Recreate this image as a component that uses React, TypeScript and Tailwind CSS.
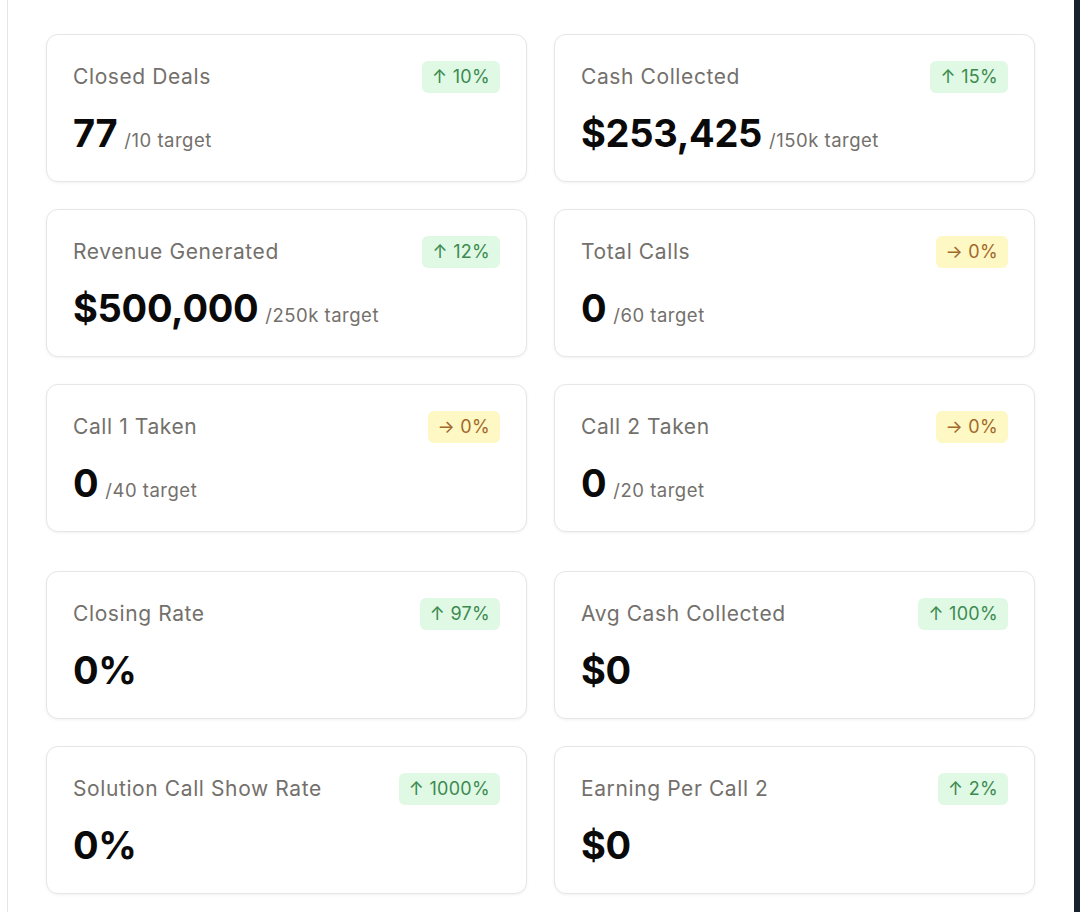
import React from "react";

type Trend = "up" | "flat";
type Card = { label: string; value: string; target?: string; badge: string; trend: Trend };

const group1: Card[] = [
  { label: "Closed Deals", value: "77", target: "/10 target", badge: "10%", trend: "up" },
  { label: "Cash Collected", value: "$253,425", target: "/150k target", badge: "15%", trend: "up" },
  { label: "Revenue Generated", value: "$500,000", target: "/250k target", badge: "12%", trend: "up" },
  { label: "Total Calls", value: "0", target: "/60 target", badge: "0%", trend: "flat" },
  { label: "Call 1 Taken", value: "0", target: "/40 target", badge: "0%", trend: "flat" },
  { label: "Call 2 Taken", value: "0", target: "/20 target", badge: "0%", trend: "flat" },
];

const group2: Card[] = [
  { label: "Closing Rate", value: "0%", badge: "97%", trend: "up" },
  { label: "Avg Cash Collected", value: "$0", badge: "100%", trend: "up" },
  { label: "Solution Call Show Rate", value: "0%", badge: "1000%", trend: "up" },
  { label: "Earning Per Call 2", value: "$0", badge: "2%", trend: "up" },
];

function Badge({ text, trend }: { text: string; trend: Trend }) {
  const cls =
    trend === "up"
      ? "bg-[#dff9e5] text-[#3d8a50]"
      : "bg-[#fdf8c4] text-[#a2682c]";
  return (
    <div className={`h-[32px] px-[10px] rounded-[6px] flex items-center text-[18px] leading-none tracking-[0.3px] ${cls}`}>
      {trend === "up" ? "↑" : "→"} {text}
    </div>
  );
}

function StatCard({ c }: { c: Card }) {
  return (
    <div className="h-[148px] rounded-[12px] border border-[#e6e6e6] bg-white shadow-[0_1px_3px_rgba(0,0,0,0.06)] px-[26px] pt-[26px]">
      <div className="h-[32px] flex items-center justify-between">
        <div className="text-[21px] leading-[28px] tracking-[0.6px] text-[#73706c]">{c.label}</div>
        <Badge text={c.badge} trend={c.trend} />
      </div>
      <div className="mt-[21px] flex items-baseline">
        <div className="text-[38px] leading-none font-bold text-[#0a0a0a] tracking-[-0.3px]">{c.value}</div>
        {c.target && (
          <div className="ml-[7px] text-[18.5px] leading-none tracking-[0.5px] text-[#73706c]">{c.target}</div>
        )}
      </div>
    </div>
  );
}

export default function App() {
  return (
    <div
      className="w-[1080px] h-[912px] flex bg-white overflow-hidden"
      style={{ fontFamily: "Inter, 'Noto Sans', sans-serif" }}
    >
      <div className="w-[8px] h-full border-r border-[#e5e5e5] shrink-0" />
      <div className="flex-1 pl-[38px] pt-[34px]">
        <div className="grid grid-cols-[481px_481px] gap-x-[27px] gap-y-[27px]">
          {group1.map((c) => (
            <StatCard key={c.label} c={c} />
          ))}
        </div>
        <div className="mt-[39px] grid grid-cols-[481px_481px] gap-x-[27px] gap-y-[27px]">
          {group2.map((c) => (
            <StatCard key={c.label} c={c} />
          ))}
        </div>
      </div>
      <div className="w-[6px] h-full bg-[#172130] shrink-0" />
    </div>
  );
}
